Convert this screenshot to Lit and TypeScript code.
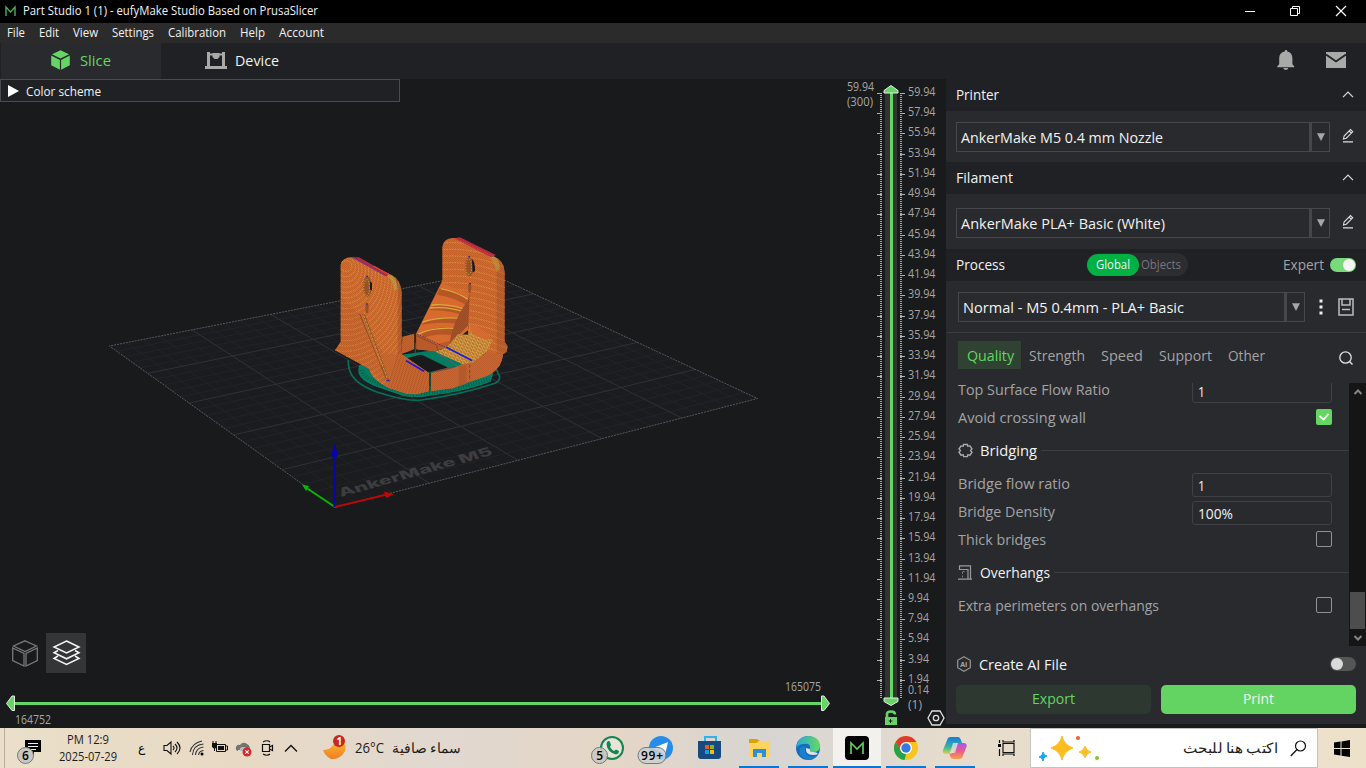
import { LitElement, html, svg, css } from "lit";
import { customElement } from "lit/decorators.js";

const label = (s: string, w: number, size: number, cls = "") => {
  const h = Math.round(size * 1.4);
  return html`<svg class="t ${cls}" width=${w} height=${h}><text x="0" y=${h / 2 + size * 0.36} font-size=${size} textLength=${w} lengthAdjust="spacingAndGlyphs">${s}</text></svg>`;
};
const icon = (w: number, h: number, body: unknown, vb = `0 0 ${w} ${h}`) =>
  html`<svg class="i" width=${w} height=${h} viewBox=${vb}>${body}</svg>`;

/* Projects bed coordinates (0..1) on to the view */
const P = (() => {
  const [x0, y0, x1, y1, x2, y2, x3, y3] = [335, 507.5, 757.5, 398.5, 487, 272, 109.4, 346];
  const dx1 = x1 - x2, dx2 = x3 - x2, sx = x0 - x1 + x2 - x3;
  const dy1 = y1 - y2, dy2 = y3 - y2, sy = y0 - y1 + y2 - y3;
  const d = dx1 * dy2 - dx2 * dy1;
  const g = (sx * dy2 - dx2 * sy) / d, h = (dx1 * sy - sx * dy1) / d;
  return (u: number, v: number) => {
    const w = g * u + h * v + 1;
    return [
      ((x1 - x0 + g * x1) * u + (x3 - x0 + h * x3) * v + x0) / w,
      ((y1 - y0 + g * y1) * u + (y3 - y0 + h * y3) * v + y0) / w,
    ].map((n) => n.toFixed(1)).join(" ");
  };
})();
const gridPath = (major: boolean) => {
  let d = "";
  for (let i = 1; i < 25; i++) {
    if ((i % 5 === 0) !== major) continue;
    const k = i / 25;
    d += `M${P(k, 0)}L${P(k, 1)}M${P(0, k)}L${P(1, k)}`;
  }
  return d;
};
const range = (n: number) => Array.from({ length: n }, (_, i) => i);

const bell = svg`<path fill="#a9a9a9" d="M10 0c.9 0 1.3.6 1.3 1.4C14.600 2.100 16.400 4.600 16.400 8v6.200l1.800 2v1H1.300v-1l1.900-2V8c0-3.400 1.900-5.900 5.500-6.600C8.700.6 9.100 0 10 0zM7.300 18h5c-.4 1.300-1.200 1.800-2.500 1.800S7.700 19.300 7.300 18z"/>`;
const up = icon(12, 7, svg`<path d="M1 6.200 6 1.200l5 5" fill="none" stroke="#ddd" stroke-width="1.200"/>`);
const pencil = icon(13, 15, svg`<path d="M1 13.900h10M1.500 11l.6-3L8.500 1.600l2.200 2.200L4.300 10.200zM7.100 3l2.200 2.200" fill="none" stroke="#ddd" stroke-width="1.100"/>`);
const combo = (s: string, w: number, cls: string) => html`<div class="combo ${cls}"><div class="cval">${label(s, w, 15, "w")}</div><div class="carr">${icon(8, 8, svg`<path d="M0 .3h8L4 8z" fill="#a6a6a6"/>`)}</div></div>`;

@customElement("scene-view")
export class SceneView extends LitElement {
  static styles = css`
    :host { display: block; width: 946px; height: 649px; }
    svg { display: block; }
    text { font-family: "Open Sans", "Noto Sans", sans-serif; }
    .lb { fill: #a6a6a6; }
    .bed { font-family: Inter, sans-serif; font-weight: 800; fill: #3d3d40; }
  `;
  model() {
    return svg`<g transform="translate(320 230) scale(.3333)">
      <path d="M85 390C82 440 115 465 170 486C230 504 270 514 305 510C380 500 460 482 525 460Q540 452 539 440L529 418" fill="none" stroke="#04705a" stroke-width="5"/>
      <path d="M118 405C105 440 135 458 180 474L250 498Q290 506 330 497C400 488 450 478 512 455L520 430 440 400 350 360 330 362 245 374 180 400z" fill="#067b62"/>
      <path d="M125 420C130 450 200 470 280 493C360 488 430 470 508 448" fill="none" stroke="#055845" stroke-width="13" stroke-dasharray="2 6"/>
      <path d="M254 386 300 374 345 374 392 402 380 414 327 427 300 422z" fill="#191a1c"/>
      <path d="M302 373 345 364 412 408 382 412z" fill="#067b62"/>
      <path d="M247 320 283 311V357L262 366 245 371z" fill="#c7622b"/>
      <path d="M247 320 283 311V357L262 366 245 371z" fill="url(#px)"/>
      <path d="M289 310 368 150 450 190 445 300 380 352 344 364 289 358z" fill="#d76a2d"/>
      <g clip-path="url(#cw)">
        <path d="M360 174Q410 180 450 210L448 230Q400 200 350 194zM340 228Q390 222 448 245V262Q390 240 330 240zM318 272Q380 256 440 264L436 284Q370 272 306 284zM306 310Q360 282 425 296L410 318Q350 306 310 324z" fill="#b65627"/>
        <g fill="none" stroke="#d9a83d" stroke-width="4"><path d="M362 176Q410 184 450 212M334 225Q390 219 448 243M330 234Q390 228 445 250M308 276Q370 257 438 267M290 314Q350 286 430 298"/></g>
        <path d="M285 350V308L350 343 400 330 380 352 344 364 285 358z" fill="#b85a2a"/>
        <path d="M285 315 350 345 355 366" fill="none" stroke="#914522" stroke-width="3"/>
      </g>
      <path d="M367 160V50Q372 25 397 24L412 24 520 79Q553 92 554 125V335L563 349 560 366 549 373Q544 420 500 438L449 455 449 395 500 370 445 315 444 190z" fill="#d66a2e"/>
      <g clip-path="url(#cr)">
        <g fill="none" stroke="#dda03b" stroke-width="3.500" stroke-dasharray="5 3" opacity=".8">${range(21).map((i) => svg`<path d="M355 ${20 + i * 20}Q465 ${8 + i * 20} 575 ${62 + i * 20}"/>`)}</g>
        <path d="M530 80V400L560 380V90z" fill="#8a4525" opacity=".3"/>
        <path d="M367 20H580V460H360z" fill="url(#px)"/>
        <path d="M500 73 524 78Q540 88 540 120L528 122Q525 95 500 73z" fill="#b79a42" opacity=".65"/>
      </g>
      <path d="M402 25 420 22 528 75 514 82z" fill="#b42b42"/><path d="M406 25 522 80" stroke="#dd4a34" stroke-width="3" stroke-dasharray="5 3"/>
      <path d="M442 213 449 190 445 285 388 345Q395 280 442 213z" fill="#a44f29"/>
      <path d="M442 213 449 190 445 285 388 345Q395 280 442 213z" fill="url(#px)"/>
      <path d="M381 351 414 313 445 314 448 280 519 330 500 366 457 400 429 403 346 365z" fill="#c88637"/>
      <path d="M381 351 414 313 445 314 448 280 519 330 500 366 457 400 429 403 346 365z" fill="url(#gold)"/>
      <path d="M449 282Q475 285 518 328Q484 333 450 304z" fill="#d66b30"/>
      <path d="M379 352 457 392" stroke="#171dd9" stroke-width="5"/><path d="M292 312 378 353" stroke="#2721a8" stroke-width="2" stroke-dasharray="5 3"/>
      <path d="M352 369 410 406" stroke="#a83c8f" stroke-width="3" stroke-dasharray="5 4"/>
      <path d="M333 429 400 414 426 403 458 398 500 367 549 373Q544 420 500 438L449 455 400 475 333 484z" fill="#cb6630"/>
      <path d="M333 429 400 414 426 403 458 398 500 367 549 373Q544 420 500 438L449 455 400 475 333 484z" fill="url(#px)"/>
      <path d="M416 409 439 404V461L416 468z" fill="#b3592c"/><path d="M449 404V454" stroke="#0a7a5e" stroke-width="3" stroke-dasharray="10 6"/>
      <path d="M350 423 402 411" stroke="#aa2e30" stroke-width="3"/>
      <path d="M62 335V105Q66 82 95 82L105 84 215 135Q244 150 245 190V373L327 429V483L290 493 262 492 205 473Q154 448 148 417L45 361z" fill="#d66b2e"/>
      <g clip-path="url(#cl)">
        <g fill="none" stroke="#dda03b" stroke-width="3.500" stroke-dasharray="5 3" opacity=".8">${range(26).map((i) => svg`<ellipse cx="78" cy="${108 + i * 3}" rx="${18 + i * 10}" ry="${16 + i * 13}"/>`)}</g>
        <path d="M62 200V330L45 361 148 417 205 473 275 492 240 430 188 365 115 250z" fill="#aa512a" opacity=".16"/>
        <path d="M210 135Q231 145 233 185V372L250 375V150z" fill="#8a4525" opacity=".36"/>
        <path d="M188 372 245 373 327 429V500H205z" fill="#cf692f"/><g stroke="#a95028" stroke-width="2" opacity=".8">${range(17).map((i) => svg`<path d="M${195 + i * 10} ${500 - i}L${236 + i * 8} ${370 + i * 5}"/>`)}</g>
        <path d="M40 75H330V500H40z" fill="url(#px)"/>
        <path d="M197 132 217 137Q233 150 232 180H221Q220 150 197 132z" fill="#b79a42" opacity=".75"/>
      </g>
      <path d="M94 82 117 82 207 133 198 139z" fill="#b42b42"/><path d="M100 82 200 138" stroke="#783480" stroke-width="5" stroke-dasharray="6 3"/><path d="M160 108 207 134" stroke="#dd4040" stroke-width="4"/>
      <path d="M117 251 135 254 208 452 196 444z" fill="#945029"/><path d="M131 256 202 445" stroke="#c6a33b" stroke-width="3" stroke-dasharray="9 3"/><path d="M124 253 185 405" stroke="#d06d33" stroke-width="4"/>
      <g fill="#985226"><ellipse cx="142" cy="170" rx="13" ry="31"/><ellipse cx="141" cy="235" rx="5" ry="15"/><ellipse cx="448" cy="110" rx="13" ry="29"/><ellipse cx="449" cy="173" rx="5" ry="15"/></g>
      <g fill="none" stroke="#b58d37" stroke-width="4" stroke-dasharray="4 4"><ellipse cx="140" cy="173" rx="9" ry="24"/><ellipse cx="446" cy="110" rx="9" ry="23"/></g>
      <path d="M150 154 156 160V182L150 178zM456 88Q466 95 465 124L458 127z" fill="#191a1c"/>
      <path d="M139 139h5M445 80h5M139 222h4M448 161h5M199 452h10" stroke="#2725b8" stroke-width="4"/>
      <path d="M258 392 312 424" stroke="#1717e5" stroke-width="5"/>
      <path d="M330 427V483M286 310V362" stroke="#222d27" stroke-width="4"/><path d="M286 340V372M330 468V486" stroke="#087154" stroke-width="3"/>
    </g>`;
  }
  render() {
    return html`<svg width="946" height="649" viewBox="0 79 946 649">
      <defs>
        <pattern id="px" width="6" height="6" patternUnits="userSpaceOnUse"><path d="M0 0h3v3H0zM3 3h3v3H3z" fill="#823a16" opacity=".22"/></pattern>
        <pattern id="gold" width="12" height="9" patternUnits="userSpaceOnUse" patternTransform="rotate(24)"><path d="M0 0h4v3H0zM7 3h3v3H7z" fill="#d9c048"/><path d="M3 6h5v3H3z" fill="#b3642e"/><path d="M10 0h2v2h-2z" fill="#7d4562"/></pattern>
        <clipPath id="cw"><path d="M289 310 368 150 450 190 445 300 380 352 344 364 289 358z"/></clipPath>
        <clipPath id="cr"><path d="M367 160V50Q372 25 397 24L412 24 520 79Q553 92 554 125V335L563 349 560 366 549 373Q544 420 500 438L449 455 449 395 500 370 445 315 444 190z"/></clipPath>
        <clipPath id="cl"><path d="M62 335V105Q66 82 95 82L105 84 215 135Q244 150 245 190V373L327 429V483L290 493 262 492 205 473Q154 448 148 417L45 361z"/></clipPath>
      </defs>
      <path d="M${P(0, 0)}L${P(1, 0)}L${P(1, 1)}L${P(0, 1)}z" fill="#1b1c1f"/>
      <path d=${gridPath(false)} stroke="#222326" fill="none"/>
      <path d=${gridPath(true)} stroke="#303134" fill="none"/>
      <path d="M${P(0, 0)}L${P(1, 0)}L${P(1, 1)}L${P(0, 1)}z" fill="none" stroke="#57585a" stroke-dasharray="2 1"/>
      <text class="bed" transform="matrix(.966 -.27 .36 .6 341 497)" font-size="18" textLength="158" lengthAdjust="spacingAndGlyphs">AnkerMake M5</text>
      ${this.model()}
      <path d="M335 507 389 494" stroke="#b50808" stroke-width="2"/><path d="M384 491.500 394 494 386 498z" fill="#b80909"/>
      <path d="M335 507 305 487" stroke="#08b308" stroke-width="2"/><path d="M302 484.500 309 486 306 491z" fill="#08b808"/>
      <path d="M334.500 507V453" stroke="#0707a8" stroke-width="2"/><path d="M331 455 334.500 443 338 455 336.500 458H332.500z" fill="#0707a8"/>

      <path d="M885 93h12v608h-12z" fill="#333334"/>
      <path d="M881 93V699M901 93V699" stroke="#a6a6a6" stroke-width="2" stroke-dasharray="1 1"/>
      <path d=${range(30).map((i) => { const y = Math.round(93 + i * 20.24) + 0.5; return `M877 ${y}h5M900 ${y}h5`; }).join("")} stroke="#b0b0b0"/>
      <path d="M891.500 93V700" stroke="#65d563" stroke-width="3"/>
      <path d="M884 93V90.500L891 85.500 898 90.500V93z" fill="#65d563" stroke="#e8e8e8"/>
      <path d="M884 698V701.500L891 705.500 898 701.500V698z" fill="#65d563" stroke="#e8e8e8"/>
      <g class="lb" font-size="12">
        ${range(30).map((i) => { const v = (59.94 - i * 2).toFixed(2); return svg`<text x="908" y=${96 + i * 20.24} textLength=${v.length > 4 ? 27.5 : 21} lengthAdjust="spacingAndGlyphs">${v}</text>`; })}
        <text x="908" y="694" textLength="21" lengthAdjust="spacingAndGlyphs">0.14</text>
        <text x="908" y="709" textLength="14">(1)</text>
        <text x="847" y="91" textLength="27" lengthAdjust="spacingAndGlyphs">59.94</text>
        <text x="847" y="106" textLength="26" lengthAdjust="spacingAndGlyphs">(300)</text>
        <text x="785" y="691" textLength="36" lengthAdjust="spacingAndGlyphs">165075</text>
        <text x="15" y="724" textLength="36" lengthAdjust="spacingAndGlyphs">164752</text>
      </g>
      <path d="M13 703.500H824" stroke="#65d563" stroke-width="3"/>
      <path d="M14.500 696V710.500H12L6.500 703.500 12 696zM821.500 696V710.500H824L829.500 703.500 824 696z" fill="#65d563" stroke="#e8e8e8"/>
      <path d="M887 718V714Q887 711.500 891 711.500T895 714.500" fill="none" stroke="#65d563" stroke-width="2.600"/><path d="M885 717h12v8h-12z" fill="#65d563"/><path d="M890.500 719v4M888.800 721h3.600" stroke="#191a1c"/>
      <path d="M932 711h8l4 7-4 7h-8l-4-7z" fill="none" stroke="#e0e0e0" stroke-width="1.300"/><circle cx="936" cy="718" r="2.700" fill="none" stroke="#e0e0e0" stroke-width="1.300"/>
    </svg>`;
  }
}

@customElement("app-root")
export class AppRoot extends LitElement {
  static styles = css`
    :host { display: block; width: 1366px; height: 768px; overflow: hidden; background: #191a1c; font-family: "Open Sans", "Noto Sans", sans-serif; }
    * { box-sizing: border-box; }
    svg { display: block; flex: none; overflow: visible; }
    .t { fill: #a3a3a4; } .w { fill: #f2f2f2; } .g { fill: #65d563; } .k { fill: #1c1c1c; } .dim { fill: #77777b; }
    .title { height: 23px; background: #000; display: grid; grid-template-columns: 18px 1222px 45px 46px 1fr; align-items: center; padding: 0 0 1px 5px; }
    .menu { height: 20px; background: #2b2b2b; display: flex; gap: 14px; padding-left: 7px; align-items: center; }
    .tabs { height: 36px; background: #1f2124; display: grid; grid-template-columns: 161px 160px 1fr 50px 40px; align-items: center; }
    .tab { height: 36px; display: flex; align-items: center; gap: 10px; padding: 0 0 2px 51px; border-left: 1px solid #1f2124; }
    .tab.on { background: #292a2e; padding-left: 50px; } .tab.dev { gap: 8px; padding-left: 43px; }
    .tabs > .i { margin-bottom: 2px; }
    .main { display: flex; height: 649px; }
    .view { position: relative; width: 946px; }
    .scheme { position: absolute; left: 0; top: 0; width: 400px; height: 23px; border: 1px solid #4a4a50; background: #202124; display: flex; align-items: center; gap: 7px; padding: 2px 0 0 7px; }
    .scheme .i { margin-bottom: 2px; }
    .modes { position: absolute; left: 5px; top: 554px; display: flex; gap: 1px; }
    .mode { width: 40px; height: 40px; display: grid; place-items: center; } .mode.on { background: #343537; }
    .panel { width: 420px; height: 645px; background: #292a2e; display: flex; flex-direction: column; }
    .head { height: 32px; background: #1f2124; display: flex; align-items: center; justify-content: space-between; padding: 0 12px 2px 10px; }
    .sel { display: flex; align-items: center; padding-left: 10px; gap: 12px; }
    .s1 { height: 51px; padding-top: 1px; } .s2 { height: 55px; padding-top: 3px; }
    .sel .i { margin-bottom: 4px; } .carr .i { margin: 0 !important; }
    .combo { display: flex; width: 374px; height: 30px; border: 1px solid #46474b; }
    .cval { flex: 1; display: flex; align-items: center; padding-left: 4px; }
    .carr { width: 20px; border-left: 3px solid #46474b; display: grid; place-items: center; }
    .proc { display: grid; grid-template-columns: 131px 101px 95px 47px 26px; justify-content: start; padding: 0 0 1px 10px; }
    .seg { width: 101px; height: 23px; border-radius: 12px; background: #2d2c31; display: flex; align-items: center; gap: 2px; }
    .glob { width: 52px; height: 22px; border-radius: 11px; background: #02b143; display: grid; place-items: center; }
    .s3 { height: 52px; padding-left: 12px; gap: 0; border-bottom: 1px solid #3a3b3f; } .c3 { width: 347px; } .c3 .cval { padding-top: 1px; }
    .s3 .i { margin: 1px 0 0 14px; } .s3 .sv { margin-left: 15px; }
    .qt { height: 50px; display: flex; align-items: center; padding: 0 0 5px 12px; gap: 16px; }
    .qon { width: 63px; height: 28px; background: #304333; display: grid; place-items: center; margin: -1px -8px 0 0; padding-left: 1px; }
    .qon + .t { margin-left: 0; }
    .srch { margin: 4px 0 0 58px; }
    .scroll { height: 263px; display: flex; overflow: hidden; }
    .opts { width: 403px; padding-left: 12px; }
    .row { height: 28px; display: flex; align-items: center; justify-content: space-between; padding-right: 17px; }
    .first { margin-top: -8px; }
    .box { width: 140px; height: 24px; border: 1px solid #404145; border-radius: 3px; display: flex; align-items: center; padding: 2px 0 0 5px; margin-top: 4px; }
    .chk { width: 16px; height: 16px; border: 1px solid #929292; border-radius: 2px; margin-bottom: 1px; } .chk.on { background: #65d563; border: none; }
    .sec { height: 38px; display: flex; align-items: center; gap: 4px; } .sec .t { margin-left: 3px; } .ln { flex: 1; height: 1px; background: #3d3e42; }
    .bar { width: 17px; background: #151515; display: flex; flex-direction: column; align-items: center; padding: 6px 0 5px; }
    .thumb { width: 15px; height: 37px; background: #4d4d4d; margin: 197px 0 6px; }
    .ai { height: 36px; display: grid; grid-template-columns: 23px 1fr 26px; align-items: center; padding: 0 10px 0 10px; }
    .btns { display: flex; gap: 10px; padding: 3px 10px; } .btn { width: 195px; height: 29px; border-radius: 5px; background: #2d3830; display: grid; place-items: center; padding-bottom: 2px; } .btn.p { background: #63d461; }
    .task { height: 40px; background: linear-gradient(90deg, #eadfc9 0, #e8d9c4 18%, #e1d8d0 32%, #e5d6c6 45%, #d7d5d3 56%, #e6dccd 70%, #eee1ca 100%); display: grid; align-items: center;
      grid-template-columns: 56px 80px 26px 27px 22px 24px 26px 24px 38px 32px 37px 202px 64px 40px 41px 49px 45px 53px 49px 63px 32px 288px 48px; }
    .clock { display: flex; flex-direction: column; align-items: center; width: 64px; gap: 1px; }
    .app { height: 40px; width: 40px; border-bottom: 2px solid #0c76d2; display: grid; place-items: center; padding-top: 2px; }
    .app.on { width: 48px; background: #f3f1ee; }
    .find { height: 40px; background: #fff; border: 1px solid #c5c3bf; display: grid; grid-template-columns: 152px 107px 1fr; align-items: center; }
    .win { justify-self: center; }
  `;
  row(s: string, w: number, c: unknown, cls = "") { return html`<div class="row ${cls}">${label(s, w, 15)}${c}</div>`; }
  render() {
    const m = "M1 10V1l4.500 5L10 1v9";
    const chev = (d: string) => icon(8, 6, svg`<path d=${d} fill="none" stroke="#858585" stroke-width="2"/>`);
    return html`
    <div class="title">
      ${icon(11, 11, svg`<path d=${m} fill="none" stroke="#4fae58" stroke-width="1.400"/>`)}
      ${label("Part Studio 1 (1) - eufyMake Studio Based on PrusaSlicer", 295, 11.7, "w")}
      ${icon(10, 10, svg`<path d="M0 5.500h10" stroke="#fff"/>`)}
      ${icon(10, 10, svg`<path d="M.5 2.500h7v7h-7zM2.500 2.500v-2h7v7h-2" fill="none" stroke="#fff"/>`)}
      ${icon(10, 10, svg`<path d="M0 0 10 10M10 0 0 10" stroke="#fff" stroke-width="1.200"/>`)}
    </div>
    <div class="menu">${([["File", 18], ["Edit", 20], ["View", 25], ["Settings", 42], ["Calibration", 58], ["Help", 25], ["Account", 45]] as [string, number][]).map(([s, w]) => label(s, w, 11.7, "w"))}</div>
    <div class="tabs">
      <div class="tab on">${icon(19, 20, svg`<path d="M9.500.2 18 4.300 9.500 8.500 1 4.300zM.2 5.600 8.900 9.900V19.800L.2 15.200zM18.800 5.600 10.100 9.900V19.800L18.800 15.200z" fill="#65d563"/>`)}${label("Slice", 31, 15, "g")}</div>
      <div class="tab dev">${icon(22, 17, svg`<path d="M0 14h22v3H0zM2 0h3v15H2zM17 0h3v15h-3zM4 1.500h14v2H4zM7.500 1h7v4L12.500 7h-3L7.500 5z" fill="#a9a9a9"/>`)}${label("Device", 44, 15, "w")}</div>
      <i></i>${icon(20, 20, bell)}
      ${icon(20, 16, svg`<path d="M0 0h20v16H0z" fill="#a9a9a9"/><path d="M0 2.500 10 9.500 20 2.500" fill="none" stroke="#1f2124" stroke-width="1.800"/>`)}
    </div>
    <div class="main">
      <div class="view"><scene-view></scene-view>
        <div class="scheme">${icon(11, 12, svg`<path d="M0 0 11 6 0 12z" fill="#fff"/>`)}${label("Color scheme", 75, 12, "w")}</div>
        <div class="modes">
          <div class="mode">${icon(26, 27, svg`<path d="M13 .8 24.500 6 13 11.500 1.500 6zM.7 8 12 13.500V26L.7 20.500zM25.300 8 14 13.500V26l11.300-5.500z" fill="none" stroke="#77787a" stroke-width="1.300"/>`)}</div>
          <div class="mode on">${icon(27, 26, svg`<path d="M13.500 1 26 7 13.500 13 1 7zM5 10.500 1 12.800l12.500 6 12.500-6-4-2.300M5 16 1 18.500l12.500 6 12.500-6-4-2.500" fill="none" stroke="#f5f5f5" stroke-width="1.500"/>`)}</div>
        </div>
      </div>
      <div class="panel">
        <div class="head">${label("Printer", 43, 15, "w")}${up}</div>
        <div class="sel s1">${combo("AnkerMake M5 0.4 mm Nozzle", 202, "")}${pencil}</div>
        <div class="head">${label("Filament", 57, 15, "w")}${up}</div>
        <div class="sel s2">${combo("AnkerMake PLA+ Basic (White)", 204, "")}${pencil}</div>
        <div class="head proc">${label("Process", 49, 15, "w")}
          <div class="seg"><div class="glob">${label("Global", 34, 12, "w")}</div>${label("Objects", 40, 12, "dim")}</div><i></i>
          ${label("Expert", 41, 15)}
          ${icon(26, 14, svg`<rect width="26" height="14" rx="7" fill="#79da7b"/><circle cx="19" cy="7" r="6" fill="#f4f4f4"/>`)}</div>
        <div class="sel s3">${combo("Normal - M5 0.4mm - PLA+ Basic", 221, "c3")}
          ${icon(4, 16, svg`<path d="M.5.500h3v3h-3zM.5 6.500h3v3h-3zM.5 12.500h3v3h-3z" fill="#eee"/>`)}
          <div class="sv">${html`<svg width="16" height="18"><path d="M1 1h14v16H1zM4 1v6h8V1M4 11.500h8" fill="none" stroke="#bdbdbd" stroke-width="1.500"/></svg>`}</div></div>
        <div class="qt"><div class="qon">${label("Quality", 47, 15, "g")}</div>${label("Strength", 56, 15)}${label("Speed", 42, 15)}${label("Support", 53, 15)}${label("Other", 37, 15)}
          <div class="srch">${html`<svg width="14" height="14"><circle cx="6.500" cy="6.500" r="5.700" fill="none" stroke="#e0e0e0" stroke-width="1.300"/><path d="m10.500 10.500 3 3" stroke="#e0e0e0" stroke-width="1.400"/></svg>`}</div></div>
        <div class="scroll">
          <div class="opts">
            ${this.row("Top Surface Flow Ratio", 152, html`<div class="box">${label("1", 7, 14.5, "w")}</div>`, "first")}
            ${this.row("Avoid crossing wall", 128, html`<div class="chk on">${icon(16, 16, svg`<path d="m3.500 7 4 3.500L12.500 5" fill="none" stroke="#fff" stroke-width="1.700"/>`)}</div>`)}
            <div class="sec">${icon(15, 15, svg`<path d="M5.200 3.200 5.600 1.500H9.400L9.800 3.200 12 2.900 14 6 12.600 7.500 14 9.200 12 12.200 9.800 11.800 9.400 13.600H5.600L5.200 11.800 3 12.200 1 9.200 2.400 7.500 1 6 3 2.900z" fill="none" stroke="#aaa" stroke-width="1.400"/>`)}${label("Bridging", 57, 15, "w")}<div class="ln"></div></div>
            ${this.row("Bridge flow ratio", 112, html`<div class="box">${label("1", 7, 14.5, "w")}</div>`)}
            ${this.row("Bridge Density", 97, html`<div class="box">${label("100%", 35, 14.5, "w")}</div>`)}
            ${this.row("Thick bridges", 88, html`<div class="chk"></div>`)}
            <div class="sec">${icon(15, 15, svg`<path d="M1 .8h12M1.500 1v3.500H10V14M12.500 1v13M0 14.200h14" fill="none" stroke="#9b9b9b" stroke-width="1.200"/><path d="M4.500 6.500h4M4.500 7v7" stroke="#777" stroke-dasharray="2 1.500"/>`)}${label("Overhangs", 70, 15, "w")}<div class="ln"></div></div>
            ${this.row("Extra perimeters on overhangs", 201, html`<div class="chk"></div>`)}
          </div>
          <div class="bar">${chev("M.5 5 4 1.500 7.500 5")}<div class="thumb"></div>${chev("M.5 1 4 4.500 7.500 1")}</div>
        </div>
        <div class="ai">${icon(15, 16, svg`<path d="m8 .7 6.300 3.600v7.400L8 15.300l-6.300-3.600V4.300z" fill="none" stroke="#969696" stroke-width="1.200"/><text x="4.200" y="10.800" font-size="7" font-weight="700" fill="#a8a8a8">AI</text>`)}${label("Create AI File", 88, 15, "w")}
          ${icon(26, 14, svg`<rect width="26" height="14" rx="7" fill="#555"/><circle cx="7" cy="7" r="6" fill="#dadada"/>`)}</div>
        <div class="btns"><div class="btn">${label("Export", 43, 15, "g")}</div><div class="btn p">${label("Print", 31, 15, "w")}</div></div>
      </div>
    </div>
    <div class="task">
      ${icon(56, 40, svg`<path d="M4.500 0v40" stroke="#b9ae9c"/><path d="M25 12h16v12H34v4l-4-4h-5z"/><path d="M28 15.500h10M28 18.500h10M28 21.500h8" stroke="#eee"/><circle cx="25.500" cy="27.500" r="8" fill="#c9c6c1" stroke="#777"/><text x="22" y="32" font-size="12" font-weight="600">6</text>`)}
      <div class="clock">${label("PM 12:9", 42, 11.7, "k")}${label("2025-07-29", 58, 11.7, "k")}</div>
      ${icon(24, 20, svg`<text x="2" y="14" font-size="12" font-family="DejaVu Sans">ع</text>`)}
      ${icon(20, 16, svg`<path d="M2 5.500h3L9 2v12L5 10.500H2zM11 6q2 2 0 4M13 4q4 4 0 8M15 2q6 6 0 12" fill="none" stroke="#111" stroke-width="1.100"/>`)}
      ${icon(16, 16, svg`<path d="M3.500 15Q4 5 14.500 4M6.500 15Q7 8 14.500 7M9.500 15Q10 11 14.500 10.500M1 12Q3 3 13 1" fill="none" stroke="#333" stroke-width="1.100"/><circle cx="13" cy="14" r="1.500"/>`)}
      ${icon(18, 14, svg`<path d="M5.500 3.500h9v7h-9zM15 5h1.500v4H15" fill="none" stroke="#111"/><path d="M7 5h6v4H7zM1 2h5v4L3.500 8 1 6z" fill="#111"/><path d="M2 0v3M5 0v3M3.500 7v3" stroke="#111"/>`)}
      ${icon(18, 16, svg`<path d="M3 11Q0 10 1 7t4-2Q8 1 12 4q3 1 3 6H3z" fill="#73736f"/><path d="M5 11Q4 7 8 7t7 4z" fill="#bbb"/><circle cx="12" cy="12" r="4.500" fill="#d8252f"/><path d="m10.300 10.300 3.400 3.400m0-3.400-3.400 3.400" stroke="#fff" stroke-width="1.200"/>`)}
      ${icon(14, 16, svg`<path d="M1.500 4.500h7v7h-7zM8.500 7l3-1.500v5L8.500 9M2 2Q6-.5 9 2M2 14q4 2.500 7 0" fill="none" stroke="#111" stroke-width="1.200"/>`)}
      ${icon(14, 8, svg`<path d="M0 7.500 6 1.500l6 6" fill="none" stroke="#111" stroke-width="1.300"/>`)}
      ${icon(28, 28, svg`<defs><linearGradient id="mo" x2="0" y2="1"><stop stop-color="#f8bf32"/><stop offset="1" stop-color="#f27d24"/></linearGradient></defs><path d="M0 16Q9 17 13 5Q25 7 22 17Q17 26 8 25Q2 22 0 16z" fill="url(#mo)"/><circle cx="16" cy="7" r="6" fill="#c4291e"/><text x="13.500" y="11" font-size="10" font-weight="700" fill="#fff">1</text>`)}
      ${label("26°C", 29, 14, "k")}
      ${label("سماء صافية", 69, 14, "k")}
      ${icon(38, 40, svg`<circle cx="18" cy="20" r="11" fill="#e7e4da" stroke="#148453" stroke-width="2"/><path d="m7 31 2-7 4 5z" fill="#148453"/><path d="M13 14q2-2 3 0l1 3-1 2q2 3 4 4l2-1.500 3 1.500q0 3-3 3.500Q13 24 12.500 16z" fill="#148453"/><circle cx="5.500" cy="27.500" r="8" fill="#ccc9c3" fill-opacity=".92" stroke="#777"/><text x="2.300" y="32" font-size="12" font-weight="600">5</text>`)}
      ${icon(38, 40, svg`<circle cx="3" cy="20" r="12" fill="#258de9"/><path d="M-5 20 10 14 7 27 1 23z" fill="#fff"/><rect x="-20" y="19.500" width="28" height="16" rx="8" fill="#ccd0d2" fill-opacity=".88" stroke="#777"/><text x="-17" y="32" font-size="12" font-weight="600" textLength="22">99+</text>`)}
      ${icon(26, 26, svg`<path d="M7 6V2h11v4" fill="none" stroke="#2eb3ec" stroke-width="2"/><path d="M0 6h23v15q0 3-3 3H3q-3 0-3-3z" fill="#174b80"/><path d="M7 10h4v4H7z" fill="#f35325"/><path d="M12 10h4v4h-4z" fill="#81bc06"/><path d="M7 15h4v4H7z" fill="#05a6f0"/><path d="M12 15h4v4h-4z" fill="#ffba08"/>`)}
      <div class="app">${icon(22, 20, svg`<path d="M1 1h8l3 2v4H1z" fill="#dca000"/><path d="M1 5h7l3-2h11v16H1z" fill="#ffd45c"/><path d="M5 19v-8h13v8h-4v-4H9v4z" fill="#2e8ed6"/>`)}</div>
      <div class="app">${icon(24, 24, svg`<defs><linearGradient id="eg"><stop stop-color="#28a8df"/><stop offset="1" stop-color="#67d95c"/></linearGradient></defs><circle cx="12" cy="12" r="12" fill="#156cb8"/><path d="M0 12Q2 0 13 0q11 1 11 10 0 6-7 6-4 0-3-3 1-6-6-5-5 0-8 4z" fill="url(#eg)"/><path d="M9 13q-1 7 8 8l5-2q-2 3-7 5Q1 22 4 12q3-3 6-1z" fill="#1b80cb"/><path d="M10 12q-1 7 7 7 3 0 5-1-1-2-5-2-4 0-3-3z" fill="#e2e2df"/>`)}</div>
      <div class="app on">${icon(24, 24, svg`<rect width="24" height="24" rx="4"/><path d="M6 18V7l6 6 6-6v11" fill="none" stroke="#5dcc5a" stroke-width="1.700"/>`)}</div>
      <div class="app">${icon(24, 24, svg`<circle cx="12" cy="12" r="12" fill="#f7c51e"/><path d="M1.600 6A12 12 0 0 1 22.400 6H12L7 15z" fill="#df3b31"/><path d="M1.600 6 7 15l5 3-1.500 6A12 12 0 0 1 1.600 6z" fill="#28a148"/><circle cx="12" cy="12" r="6" fill="#fff"/><circle cx="12" cy="12" r="4.700" fill="#3579e3"/>`)}</div>
      <div class="app">${icon(26, 24, svg`<defs><linearGradient id="c1" x2="0" y2="1"><stop stop-color="#167bdc"/><stop offset=".6" stop-color="#39b5a0"/><stop offset="1" stop-color="#e1d63c"/></linearGradient><linearGradient id="c2" x2="0" y2="1"><stop stop-color="#a25ce8"/><stop offset=".5" stop-color="#e95a8e"/><stop offset="1" stop-color="#f6a04d"/></linearGradient></defs><path d="M6 2q1-1 3-1h7q2 0 3 3l1 3h-4q-2 0-3 3l-2 6q-1 2-3 2H4q-4 0-3-4z" fill="url(#c1)"/><path d="M20 22q-1 1-3 1h-6q-2 0-3-3l-.5-2q3 0 4-3l2-6q1-2 3-2h5q4 0 3 4z" fill="url(#c2)"/><path d="m11 7h5l-3 10H8z" fill="#eee" opacity=".7"/>`)}</div>
      ${icon(18, 18, svg`<path d="M5 4.500h11v9H5zM5 1v2h11V1M5 17v-2h11v2M1.500 1v3M1.500 10v7" fill="none" stroke="#111" stroke-width="1.200"/><path d="M0 5h3v3H0z"/>`)}
      <div class="find">
        ${icon(90, 38, svg`<path d="M31 7Q33 16 42 19 33 22 31 31 29 22 20 19 29 16 31 7zM54 17Q55 22 60 23 55 24 54 29 53 24 48 23 53 22 54 17z" fill="#fdbd20" stroke="#fdbd20" stroke-linejoin="round"/><path d="M12 23q1 4 4 4-4 1-4 5-1-4-4-4 4-1 4-5z" fill="#11a8ee" stroke="#11a8ee"/><circle cx="47" cy="9" r="2" fill="#f45b2c"/><circle cx="66" cy="29" r="2" fill="#81c52d"/>`)}
        ${label("اكتب هنا للبحث", 95, 14, "k")}
        ${icon(17, 17, svg`<circle cx="10.500" cy="6" r="5" fill="none" stroke="#111" stroke-width="1.200"/><path d="M7 9.500 .8 16" stroke="#111" stroke-width="1.300"/>`)}
      </div>
      <div class="win">${icon(17, 17, svg`<path d="M0 2.500 6.500 1.500V8H0zM7.500 1.400 16 0v8H7.500zM0 9h6.500v6.500L0 14.500zM7.500 9H16v8l-8.500-1.300z"/>`)}</div>
    </div>`;
  }
}
